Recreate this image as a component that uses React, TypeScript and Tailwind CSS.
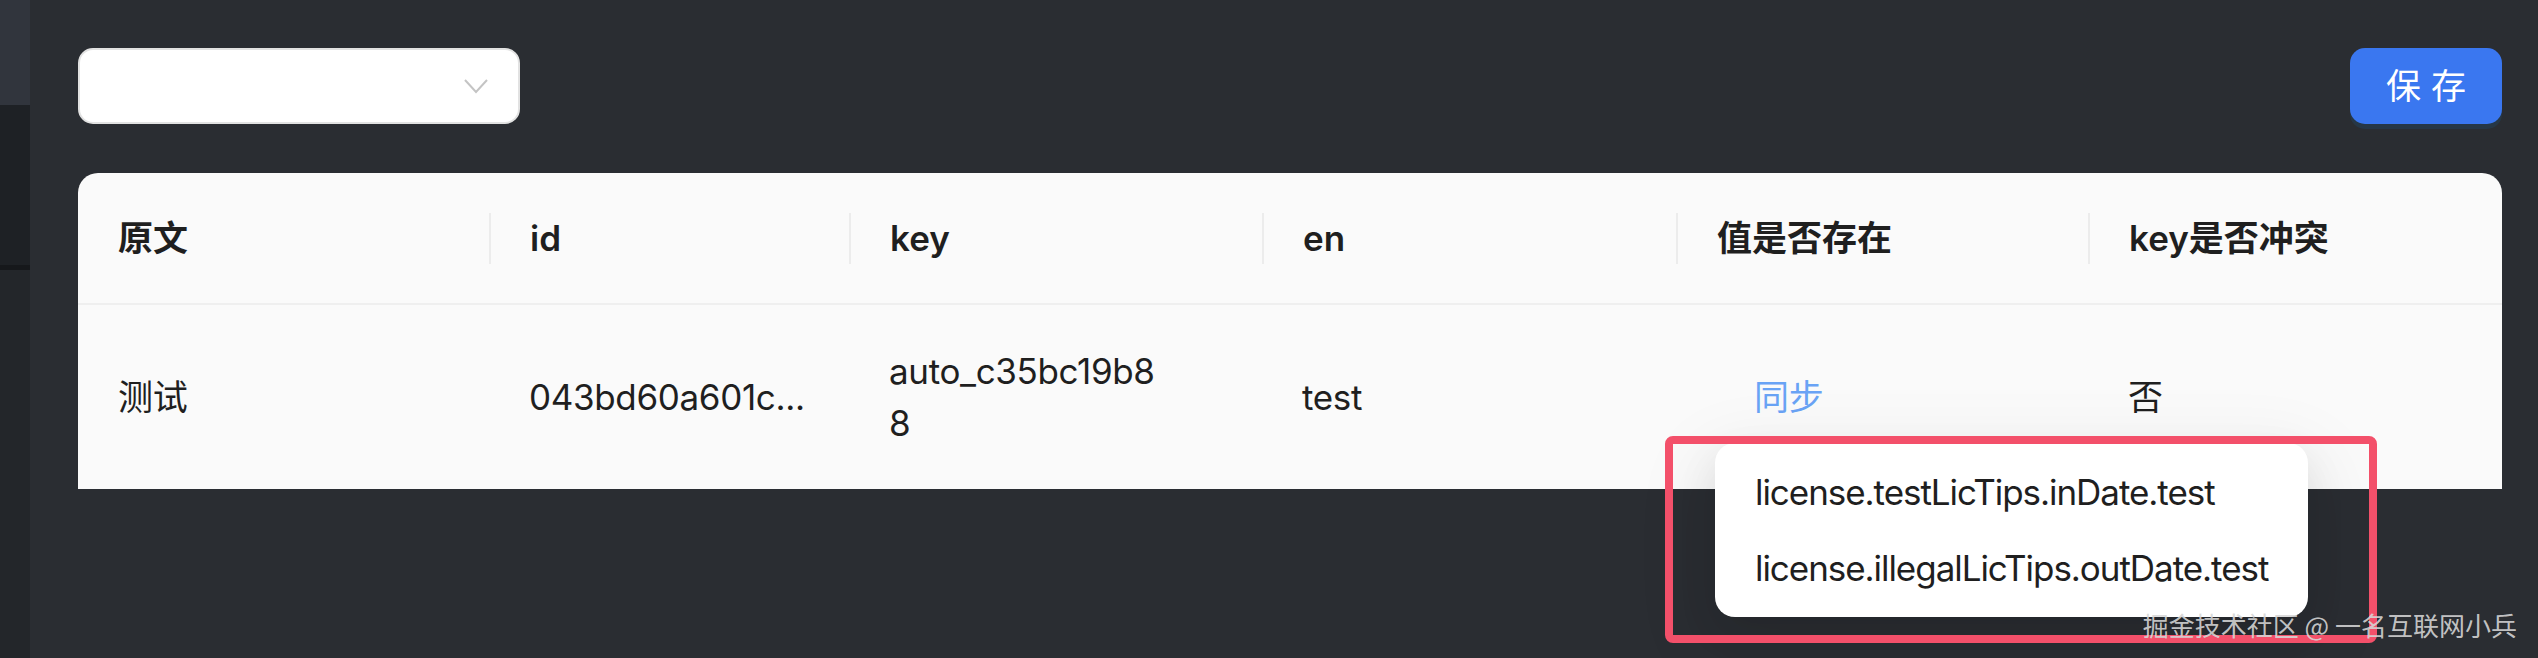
const columns = ["原文", "id", "key", "en", "值是否存在", "key是否冲突"];

const tips = ["license.testLicTips.inDate.test", "license.illegalLicTips.outDate.test"];

function Chevron() {
    return (
        <svg width="24" height="16" viewBox="0 0 24 16" fill="none">
            <polyline points="1,2 12,14 23,2" stroke="#c4c4c4" strokeWidth="2" />
        </svg>
    );
}

export default function App() {
    return (
        <div className="relative flex min-h-[658px] bg-[#2a2d32] font-['Inter','Noto_Sans_CJK_SC',sans-serif] text-[35px] leading-[52px] text-[#1f1f1f]">
            <aside className="flex w-[30px] shrink-0 flex-col">
                <div className="h-[105px] bg-[#31353d]" />
                <div className="h-[160px] bg-[#1e2125]" />
                <div className="h-[5px] bg-[#16181b]" />
                <div className="flex-1 bg-[#23262a]" />
            </aside>

            <main className="flex-1 pl-[48px] pr-[36px] pt-[48px]">
                <div className="flex items-center justify-between">
                    <div className="flex h-[76px] w-[442px] items-center justify-end rounded-[15px] border-2 border-[#e2e2e2] bg-white pr-[30px]">
                        <Chevron />
                    </div>
                    <button className="h-[76px] w-[152px] rounded-[15px] bg-[#3a77f0] text-white shadow-[0_5px_0_rgba(5,145,255,0.1)]">
                        保 存
                    </button>
                </div>

                <div className="mt-[49px] overflow-hidden rounded-t-[20px] bg-[#fafafa]">
                    <div className="grid grid-cols-[411px_360px_413px_414px_412px_1fr] border-b-2 border-[#efefef] font-semibold">
                        {columns.map((c, i) => (
                            <div key={c} className="flex items-center py-[39px]">
                                {i > 0 && <span className="h-[51px] w-[2px] bg-[#ececec]" />}
                                <span className={i > 0 ? "pl-[39px]" : "pl-[40px]"}>{c}</span>
                            </div>
                        ))}
                    </div>
                    <div className="grid grid-cols-[411px_360px_413px_414px_412px_1fr] tracking-[-0.01em]">
                        <div className="flex items-center px-[40px] py-[40px]">测试</div>
                        <div className="flex items-center whitespace-nowrap px-[40px] py-[40px]">043bd60a601c...</div>
                        <div className="flex flex-col justify-center px-[40px] py-[40px]">
                            <span>auto_c35bc19b8</span>
                            <span>8</span>
                        </div>
                        <div className="flex items-center px-[40px] py-[40px]">test</div>
                        <div className="flex items-center px-[40px] py-[40px]">
                            <button className="px-[38px] text-[#69a3f5]">同步</button>
                        </div>
                        <div className="flex items-center px-[40px] py-[40px]">否</div>
                    </div>
                </div>
            </main>

            <div className="absolute left-[1715px] top-[443px] rounded-[20px] bg-white py-[11px] tracking-[-0.03em] shadow-[0_15px_40px_rgba(0,0,0,0.08),0_22px_70px_20px_rgba(0,0,0,0.06)]">
                {tips.map((t) => (
                    <div key={t} className="whitespace-nowrap px-[40px] py-[12px]">
                        {t}
                    </div>
                ))}
            </div>

            <div className="absolute left-[1665px] top-[436px] h-[207px] w-[712px] rounded-[8px] border-[8px] border-[#f3506a]" />

            <div className="absolute right-[21px] top-[608px] text-[26px] leading-[34px] text-[#d6d6d6]/90 font-['Noto_Sans_CJK_SC',sans-serif]">
                掘金技术社区 @ 一名互联网小兵
            </div>
        </div>
    );
}
